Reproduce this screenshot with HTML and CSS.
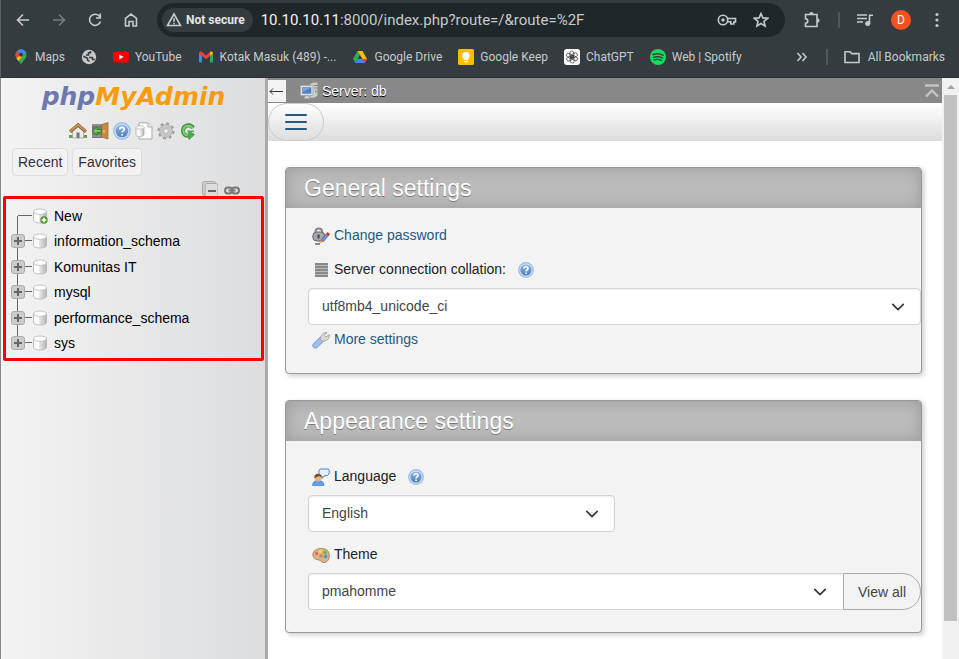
FILE: index.html
```html
<!DOCTYPE html>
<html lang="en">
<head>
<meta charset="utf-8">
<title>phpMyAdmin</title>
<link rel="stylesheet" href="styles.css">
</head>
<body>
<svg class="defs" aria-hidden="true">
  <defs>
    <linearGradient id="blue" x1="0" y1="0" x2="0" y2="1"><stop offset="0" stop-color="#8fb6e0"/><stop offset="1" stop-color="#4a7fbf"/></linearGradient>
    <linearGradient id="cyl" x1="0" y1="0" x2="1" y2="0"><stop offset="0" stop-color="#f7f7f7"/><stop offset=".4" stop-color="#ffffff"/><stop offset="1" stop-color="#b4b4b4"/></linearGradient>
    <symbol id="help" viewBox="0 0 16 16"><circle cx="8" cy="8" r="7.900" fill="#9dbde0"/><circle cx="8" cy="8" r="6.700" fill="#cfe0f3"/><circle cx="8" cy="8" r="5.600" fill="url(#blue)"/><path d="M6 6.600C6 4.200 10 4.200 10 6.400 10 7.800 8.100 7.800 8.100 9.400M8.100 10.600v1.300" fill="none" stroke="#fff" stroke-width="1.600"/></symbol>
    <symbol id="db" viewBox="0 0 16 16"><path d="M1.500 4v8.500C2 15.800 14 15.800 14.500 12.500V4z" fill="url(#cyl)" stroke="#b0b0b0" stroke-width=".8"/><path d="M8 7v7M10 7v7M12 6v7" stroke="#aaa" stroke-opacity=".4"/><ellipse cx="8" cy="3.700" rx="6.500" ry="2.700" fill="#fff" stroke="#b5b5b5" stroke-width=".8"/></symbol>
    <symbol id="chevron" viewBox="0 0 16 16"><path d="M2 5l6 6 6-6" fill="none" stroke="#343a40" stroke-width="2" stroke-linecap="round" stroke-linejoin="round"/></symbol>
  </defs>
</svg>

<header class="browser">
  <div class="toolbar">
    <button class="tool" aria-label="Back"><svg class="i16" viewBox="0 0 16 16"><path d="M14 8H3M8 2.500 2.500 8 8 13.500" class="ln"/></svg></button>
    <button class="tool dim" aria-label="Forward"><svg class="i16" viewBox="0 0 16 16"><path d="M2 8h11M8 2.500 13.500 8 8 13.500" class="ln"/></svg></button>
    <button class="tool" aria-label="Reload"><svg class="i16" viewBox="0 0 16 16"><path d="M12.700 4.500A5.600 5.600 0 1 0 13.500 9.500M13.300 1.500V6H9" class="ln"/></svg></button>
    <button class="tool" aria-label="Home"><svg class="i16" viewBox="0 0 16 16"><path d="M2.500 6.300 8 2l5.500 4.300V14H10V9.500H6V14H2.500z" class="ln"/></svg></button>
    <div class="omnibox">
      <button class="security"><svg class="i16" viewBox="0 0 16 16"><path d="M8 2 14.500 13.500H1.500zM8 6.200v3.500M8 10.700v1.500" class="ln"/></svg>Not secure</button>
      <div class="url"><b>10.10.10.11</b>:8000/index.php?route=/&amp;route=%2F</div>
      <svg class="key" viewBox="0 0 20 16"><circle cx="6" cy="8" r="4.700" class="ln"/><circle cx="6" cy="8" r="1.700" fill="#c7cacb"/><path d="M10.300 6.500H18.500V10H16.800V12H13.800V9.800H10.300" class="ln"/></svg>
      <svg class="i16" viewBox="0 0 16 16"><path d="M8 1.600 9.900 5.900 14.600 6.300 11 9.400 12.100 14 8 11.500 3.900 14 5 9.400 1.400 6.300 6.100 5.900z" class="ln"/></svg>
    </div>
    <button class="tool ext" aria-label="Extensions"><svg class="i18" viewBox="0 0 18 18"><path d="M2.500 3.500H14V15.500H2.500V12.200C5.500 12 5.500 8 2.500 7.800V3.500z" class="ln"/><path d="M6.300 3.200a2.200 2.200 0 0 1 4.400 0zM14.300 7.300a2.200 2.200 0 0 1 0 4.400z" fill="#c7cacb"/></svg></button>
    <span class="rule"></span>
    <button class="tool" aria-label="Media"><svg class="i16" viewBox="0 0 16 16"><path d="M0 3h10M0 6.500h10M0 10h6M12.500 12V3.200H16" class="ln"/><circle cx="10.700" cy="11.500" r="2.500" fill="#c7cacb"/></svg></button>
    <button class="tool" aria-label="Profile"><span class="avatar">D</span></button>
    <button class="tool" aria-label="Menu"><svg class="i16" viewBox="0 0 16 16"><g fill="#c7cacb"><circle cx="8" cy="2.500" r="1.600"/><circle cx="8" cy="8" r="1.600"/><circle cx="8" cy="13.500" r="1.600"/></g></svg></button>
  </div>
  <nav class="bookmarks">
    <a href="#"><svg class="i16" viewBox="0 0 16 16"><path d="M8 16C7 12 2.500 10.500 2.500 5.800a5.500 5.500 0 0 1 11 0C13.500 10.500 9 12 8 16z" fill="#34a853"/><path d="M3.900 2.200A5.500 5.500 0 0 1 13.200 4L8 6z" fill="#4285f4"/><path d="M3.900 2.200 8 6 3.500 9.500C2.200 7 2 4.500 3.900 2.200z" fill="#ea4335"/><path d="M3.500 9.500 8 5 9.500 7.500 5.300 12z" fill="#fbbc04"/><circle cx="8" cy="5.800" r="2" fill="#343c3f"/></svg>Maps</a>
    <a href="#" aria-label="Website"><svg class="i16" viewBox="0 0 16 16"><circle cx="8" cy="8" r="7.200" fill="#c7cacb"/><path d="M2.300 7.200 6.500 9.200V11L8.500 12.500M9.500 2v1.800H7.500V6H5M8 8.500h3.500v2H14" fill="none" stroke="#343c3f" stroke-width="1.500"/></svg></a>
    <a href="#"><svg class="i16" viewBox="0 0 16 16"><rect y="2.500" width="16" height="11" rx="3" fill="#f00"/><path d="M6.300 5.500v5l4.300-2.500z" fill="#fff"/></svg>YouTube</a>
    <a href="#"><svg class="i16" viewBox="0 0 16 16"><path d="M1 4v9.500h3V7z" fill="#4285f4"/><path d="M15 4v9.500h-3V7z" fill="#34a853"/><path d="M1 4.500C1 2.500 3 2 4 3l4 3.200L12 3V7L8 10.200 4 7 1 5z" fill="#ea4335"/><path d="M12 3c1-1 3-.5 3 1.500L12 7z" fill="#fbbc04"/></svg>Kotak Masuk (489) -...</a>
    <a href="#"><svg class="i16" viewBox="0 0 16 16"><path d="M5.500 2 1 9.700 3.300 14 8 6z" fill="#34a853"/><path d="M5.500 2h5L15 10h-4.500z" fill="#fbbc04"/><path d="M5.500 10H15L12.700 14H3.300z" fill="#4285f4"/><path d="M10.500 10H15l-2.300 4z" fill="#ea4335"/></svg>Google Drive</a>
    <a href="#"><svg class="i16" viewBox="0 0 16 16"><rect width="16" height="16" rx="1.500" fill="#fbbc04"/><circle cx="8" cy="6.700" r="3.700" fill="#fff"/><path d="M6 9h4v2H6zM6 12h4v1.200H6z" fill="#fff"/></svg>Google Keep</a>
    <a href="#"><svg class="i16" viewBox="0 0 16 16"><rect width="16" height="16" rx="3" fill="#fff"/><g fill="none" stroke="#333" stroke-width=".7"><rect x="5.800" y="2" width="4" height="7" rx="2"/><rect x="5.800" y="2" width="4" height="7" rx="2" transform="rotate(60 8 8)"/><rect x="5.800" y="2" width="4" height="7" rx="2" transform="rotate(120 8 8)"/><rect x="5.800" y="2" width="4" height="7" rx="2" transform="rotate(180 8 8)"/><rect x="5.800" y="2" width="4" height="7" rx="2" transform="rotate(240 8 8)"/><rect x="5.800" y="2" width="4" height="7" rx="2" transform="rotate(300 8 8)"/></g></svg>ChatGPT</a>
    <a href="#"><svg class="i16" viewBox="0 0 16 16"><circle cx="8" cy="8" r="8" fill="#1ed760"/><path d="M3 5.500Q8.500 3.800 13.200 6.300M3.500 8.300Q8.500 6.800 12.500 9M4 10.900Q8.300 9.700 11.500 11.500" fill="none" stroke="#343c3f" stroke-width="1.400" stroke-linecap="round"/></svg>Web | Spotify</a>
    <button class="more" aria-label="More bookmarks"><svg class="i16" viewBox="0 0 16 16"><path d="M3.500 4 7 8l-3.500 4M8.500 4 12 8l-3.500 4" class="ln"/></svg></button>
    <span class="rule"></span>
    <a href="#" class="all"><svg class="i16" viewBox="0 0 16 16"><path d="M1 2.800H6L7.800 4.600H15V13.500H1z" class="ln"/></svg>All Bookmarks</a>
  </nav>
</header>

<div class="page">
  <aside class="sidebar">
    <a class="logo" href="#"><span>php</span>MyAdmin</a>
    <div class="shortcuts">
      <a href="#" aria-label="Home"><svg class="i18" viewBox="0 0 18 18"><path d="M0 13h18v3H0z" fill="#65a33e"/><path d="M3.500 8 9 3.500 14.500 8v8h-11z" fill="#ececec" stroke="#999" stroke-width=".7"/><path d="M1 9.800 9 3l8 6.800" fill="none" stroke="#8a5a28" stroke-width="3.400"/><path d="M1 9.500 9 2.700l8 6.800" fill="none" stroke="#c89255" stroke-width="1.800"/><path d="M7.500 10.500h3V16h-3z" fill="#777"/></svg></a>
      <a href="#" aria-label="Log out"><svg class="i18" viewBox="0 0 18 18"><path d="M1 2h10v14H1z" fill="#777"/><path d="M1 3h9M1 14h9" stroke="#aaa"/><path d="M10.500 2.500 17 .500V17l-6.500-2z" fill="#c88a43" stroke="#9a642d" stroke-width=".7"/><path d="M13 8v3" stroke="#f8db91"/><path d="M1.500 9 6 4.800v2.700h4.500v3H6v2.700z" fill="#72c35c" stroke="#307820" stroke-width=".8"/></svg></a>
      <a href="#" aria-label="Documentation"><svg class="i18"><use href="#help"/></svg></a>
      <a href="#" aria-label="MariaDB documentation"><svg class="i18" viewBox="0 0 18 18"><path d="M4 .800H13L17 4.800V17H4z" fill="#fcfcfc" stroke="#aaa"/><path d="M13 .800V5h4" fill="#eee" stroke="#aaa"/><path d="M1 5.500v7.500c1 2 7 2 8 0V5.500z" fill="url(#cyl)" stroke="#aaa" stroke-width=".7"/><ellipse cx="5" cy="5.500" rx="4" ry="1.700" fill="#fff" stroke="#aaa" stroke-width=".7"/></svg></a>
      <a href="#" aria-label="Settings"><svg class="i18" viewBox="0 0 18 18"><circle cx="9" cy="9" r="7" fill="none" stroke="#999" stroke-width="3" stroke-dasharray="2.700 2.800"/><circle cx="9" cy="9" r="4.800" fill="none" stroke="#c4c4c4" stroke-width="4"/><circle cx="9" cy="9" r="6.500" fill="none" stroke="#aaa" stroke-width=".6"/><circle cx="9" cy="9" r="2.400" fill="#eee" stroke="#999" stroke-width=".7"/></svg></a>
      <a href="#" aria-label="Reload navigation"><svg class="i18" viewBox="0 0 18 18"><path d="M14 6C11.500 1.500 4 3 4 8.800c0 3.700 3 5.200 6 5" fill="none" stroke="#388b38" stroke-width="4"/><path d="M13.700 5.800C11 2 4.300 3.500 4.300 8.800c0 3.200 2.700 4.700 5.700 4.700" fill="none" stroke="#7ccc72" stroke-width="2.200"/><path d="M9.500 9 15.500 12.500 10 17.500z" fill="#54aa50" stroke="#388b38" stroke-width=".7"/><path d="M8.500 8.500H15V10H8.500z" fill="#54aa50"/></svg></a>
    </div>
    <div class="quick"><button>Recent</button><button>Favorites</button></div>
    <div class="controls">
      <button aria-label="Collapse all"><svg class="i16" viewBox="0 0 16 16"><rect x=".5" y=".5" width="13" height="14" rx="2" fill="#d0d0d0" stroke="#aaa"/><rect x="3" y="2.500" width="13" height="14" rx="2" fill="#ddd" stroke="#aaa"/><path d="M6 10h8" stroke="#666" stroke-width="2"/></svg></button>
      <button aria-label="Link with main panel"><svg class="i16" viewBox="0 0 16 16"><g fill="none" stroke="#777" stroke-width="2"><rect x="1" y="6.500" width="7" height="6" rx="3"/><rect x="8" y="6.500" width="7" height="6" rx="3"/><path d="M4.500 9.500h7"/></g></svg></button>
    </div>
    <ul class="tree">
      <li class="first"><span class="stem"></span><svg class="i16"><use href="#db"/></svg><svg class="plus" viewBox="0 0 8 8"><circle cx="4" cy="4" r="3.700" fill="#54942f"/><path d="M4 1.700v4.600M1.700 4h4.600" stroke="#fff" stroke-width="1.700"/></svg><a href="#">New</a></li>
      <li><button class="toggle" aria-label="Expand"></button><svg class="i16"><use href="#db"/></svg><a href="#">information_schema</a></li>
      <li><button class="toggle" aria-label="Expand"></button><svg class="i16"><use href="#db"/></svg><a href="#">Komunitas IT</a></li>
      <li><button class="toggle" aria-label="Expand"></button><svg class="i16"><use href="#db"/></svg><a href="#">mysql</a></li>
      <li><button class="toggle" aria-label="Expand"></button><svg class="i16"><use href="#db"/></svg><a href="#">performance_schema</a></li>
      <li class="last"><button class="toggle" aria-label="Expand"></button><svg class="i16"><use href="#db"/></svg><a href="#">sys</a></li>
    </ul>
  </aside>

  <main class="content">
    <div class="serverbar">
      <button class="hide" aria-label="Hide panel"><svg class="i16" viewBox="0 0 16 16"><path d="M15 8.500H2M5 5.500 2 8.500l3 3" fill="none" stroke="#333"/></svg></button>
      <svg class="i18 server" viewBox="0 0 18 18"><path d="M10 2l3-1.500h4.500V14L14 16h-4z" fill="#ccc" stroke="#999" stroke-width=".6"/><path d="M14 3.500h3M14 6h3" stroke="#888"/><path d="M15 8.500h1.500v2H15z" fill="#49b749"/><rect x=".5" y="3.500" width="12.500" height="10" rx="1" fill="#ddd" stroke="#aaa"/><rect x="2.300" y="5.300" width="9" height="6.400" fill="#4c80c8"/><path d="M3 6h7L3 10z" fill="#79a5e0"/><path d="M5 14h4l1 2.500H4z" fill="#ccc"/></svg>
      <a href="#">Server: db</a>
      <button class="top" aria-label="Scroll to top"><svg viewBox="0 0 14 14"><path d="M0 1.500h14M1 12.500 7 6.500l6 6" fill="none" stroke="#c4c4c4" stroke-width="2.400"/></svg></button>
    </div>
    <div class="tabs"><button aria-label="Menu"><svg viewBox="0 0 22 18"><path d="M1 2h20M1 9h20M1 16h20" stroke="#235a81" stroke-width="2" stroke-linecap="round"/></svg></button></div>

    <section class="card">
      <h2>General settings</h2>
      <div class="body general">
        <div class="line"><svg class="i18" viewBox="0 0 18 18"><path d="M3.500 6V4.500c0-4 6.500-4 6.500 0V6" fill="none" stroke="#888" stroke-width="2"/><rect x=".800" y="5" width="12" height="9" rx="4" fill="#a6a6b0" stroke="#666"/><path d="M6.500 7.500v4" stroke="#444" stroke-width="2"/><path d="M9 13.500 14.500 6.500l2.500 1.500-6 7z" fill="#7a8fd8" stroke="#3d4990" stroke-width=".6"/><path d="M14 7 15.500 5 18 7 16.700 9z" fill="#dd3b25"/><path d="M6.500 16.500 9 13.500l2 1.500z" fill="#e9b436"/><path d="M3 17h5" stroke="#222"/></svg><a href="#">Change password</a></div>
        <div class="line next"><svg class="i18" viewBox="0 0 18 18"><path d="M3 3h13M3 6h13M3 9h13M3 12h13M3 15h13" stroke="#666" stroke-width="1.500"/><path d="M3 4.500h13M3 7.500h13M3 10.500h13M3 13.500h13" stroke="#bbb"/></svg><label for="collation">Server connection collation:</label><a class="help" href="#" aria-label="Help"><svg class="i16"><use href="#help"/></svg></a></div>
        <div class="select"><select id="collation"><option>utf8mb4_unicode_ci</option></select><svg class="i14"><use href="#chevron"/></svg></div>
        <div class="line more-settings"><svg class="i18" viewBox="0 0 18 18"><path d="M3.500 14.500 9 9" stroke="#6c94d5" stroke-width="6" stroke-linecap="round"/><path d="M3.500 14.500 9 9" stroke="#a3c0f0" stroke-width="4.500" stroke-linecap="round"/><path d="M8.500 9C8 5 11 1 15 1.500L12.500 4.500 14 6 17.300 3.500C18 8 14 11 10.500 10z" fill="#d8d8d8" stroke="#999" stroke-width=".8"/></svg><a href="#">More settings</a></div>
      </div>
    </section>

    <section class="card">
      <h2>Appearance settings</h2>
      <div class="body appearance">
        <div class="line"><svg class="i18" viewBox="0 0 18 18"><path d="M8 1h8.500c1.500 2 1 5-1 6.500L12 8l-2 2.500V8C6.500 7 6 3 8 1z" fill="#e6f0ff" stroke="#4d7ebf"/><path d="M.5 17.500c0-7 11.500-7 11.500 0z" fill="#5f9ff0" stroke="#326eb2" stroke-width=".6"/><circle cx="6" cy="10" r="3.500" fill="#e9b27e"/><path d="M2.300 10C2 4.500 9.500 4.500 9.500 9.500L7.500 8z" fill="#744827"/></svg><label for="language">Language</label><a class="help" href="#" aria-label="Help"><svg class="i16"><use href="#help"/></svg></a></div>
        <div class="select half"><select id="language"><option>English</option></select><svg class="i14"><use href="#chevron"/></svg></div>
        <div class="line theme"><svg class="i18" viewBox="0 0 18 18"><path d="M1 7C3 1.500 15 .500 17 7c1.500 6-2 10-6 9.500-2-.5-2-2-4-2.500C5 13.500 4 13.500 2.500 12.500 1 11 .500 9 1 7z" fill="#ddb487" stroke="#aa7446" stroke-width=".8"/><circle cx="4.500" cy="7.500" r="1.700" fill="#ee6a58"/><circle cx="8.500" cy="5" r="1.700" fill="#f2d65b"/><circle cx="13" cy="6.500" r="1.900" fill="#74ba46"/><circle cx="13.500" cy="10.500" r="1.900" fill="#5397cf"/><circle cx="9" cy="10" r="1.700" fill="#c08b5c"/></svg><label for="theme">Theme</label></div>
        <div class="group"><div class="select"><select id="theme"><option>pmahomme</option></select><svg class="i14"><use href="#chevron"/></svg></div><button>View all</button></div>
      </div>
    </section>
  </main>
  <div class="scrollbar"><span class="arrow"></span><span class="thumb"></span></div>
</div>
</body>
</html>
```
FILE: styles.css
```css
* { box-sizing: border-box; }
body {
  margin: 0;
  height: 100vh;
  display: flex;
  flex-direction: column;
  overflow: hidden;
  background: #fff;
  color: #222;
  font: 14px/20px "Liberation Sans", Arial, sans-serif;
}
button { margin: 0; padding: 0; border: 0; background: none; font: inherit; color: inherit; }
a { color: inherit; text-decoration: none; }
svg { display: block; flex: none; }
.defs { position: absolute; width: 0; height: 0; }
.i14 { width: 14px; height: 14px; }
.i16 { width: 16px; height: 16px; }
.i18 { width: 18px; height: 18px; }
.ln { fill: none; stroke: #c7cacb; stroke-width: 1.6; }

/* browser frame */
.browser {
  flex: none;
  background: #343c3f;
  color: #c7cacb;
  border-left: 1px solid #596164;
  border-bottom: 1px solid #293033;
  font-family: Roboto, "Noto Sans", sans-serif;
  font-size: 12px;
}
.toolbar { display: flex; align-items: center; height: 40px; padding: 0 4px; }
.tool { flex: none; width: 36px; height: 34px; display: flex; align-items: center; justify-content: center; }
.dim { opacity: .45; }
.rule { flex: none; width: 2px; height: 16px; margin: 0 7px 0 8px; background: #50585b; }
.omnibox {
  flex: 1;
  display: flex;
  align-items: center;
  gap: 16px;
  height: 34px;
  margin-left: 8px;
  padding: 0 16px 0 5px;
  border-radius: 17px;
  background: #1f272a;
}
.security {
  flex: none;
  display: flex;
  align-items: center;
  gap: 4px;
  height: 24px;
  padding: 0 8px 0 4px;
  border-radius: 12px;
  background: #343c3f;
  color: #e3e5e6;
  font-weight: 700;
}
.url { flex: 1; margin-left: -8px; font-size: 15px; white-space: nowrap; overflow: hidden; }
.url b { font-weight: 400; color: #f1f3f3; }
.key { width: 20px; height: 16px; }
.ext { margin-left: 9px; }
.avatar { width: 20px; height: 20px; border-radius: 50%; background: #f4511e; color: #fff; line-height: 20px; font-size: 12px; }
.bookmarks { display: flex; align-items: center; gap: 16px; height: 37px; padding: 0 14px 3px 12px; white-space: nowrap; }
.bookmarks a { display: flex; align-items: center; gap: 6px; }
.bookmarks .rule { margin: 0; }
.more { margin-left: auto; }
.bookmarks .all { gap: 8px; }

/* navigation panel */
.page { flex: 1; min-height: 0; display: flex; border-left: 1px solid #888; }
.sidebar {
  flex: none;
  width: 267px;
  padding: 4px 1px 0 2px;
  border-right: 3px solid #aaa;
  background: linear-gradient(to right, #f3f3f3, #dcdddf);
  color: #000;
}
.logo {
  display: block;
  text-align: center;
  font: italic 700 25px/30px "DejaVu Sans", sans-serif;
  color: #f89c0e;
}
.logo span { color: #6c78af; }
.shortcuts { display: flex; justify-content: center; gap: 4px; padding: 10px 2px 0 0; }
.quick { display: flex; gap: 4px; padding: 8px 0 0 9px; }
.quick button {
  height: 28px;
  padding: 0 5px;
  border: 1px solid #ddd;
  border-radius: 4px;
  background: #f2f2f2;
  color: #333;
}
.controls { display: flex; justify-content: flex-end; gap: 6px; height: 20px; padding: 5px 24px 0 0; overflow: hidden; }
.tree {
  display: grid;
  grid-auto-rows: 1fr;
  min-height: 165px;
  margin: 0;
  padding: 4px 0 2px 5px;
  border: 3px solid #f00;
  border-radius: 2px;
  list-style: none;
}
.tree li { position: relative; display: flex; align-items: center; }
.tree a { margin-left: 6px; }
.tree li > svg { position: relative; }
.stem { width: 14px; height: 1px; margin-left: 7px; background: #666; }
.tree li::before { content: ""; position: absolute; left: 6px; top: 0; bottom: 0; width: 1px; background: #666; }
.tree .first::before { top: 50%; }
.tree .last::before { bottom: 50%; }
.toggle {
  position: relative;
  width: 14px;
  height: 14px;
  margin-right: 7px;
  border: 1px solid #aaa;
  border-radius: 3px;
  background: linear-gradient(#666, #666) center / 8px 2px no-repeat, linear-gradient(#666, #666) center / 2px 8px no-repeat, #ccc;
}
.toggle::after { content: ""; position: absolute; left: 13px; top: 5px; width: 7px; height: 1px; background: #666; }
.tree li > .plus { position: absolute; left: 29px; top: 13px; width: 8px; height: 8px; }

/* main panel */
.content { flex: 1; min-width: 0; }
.serverbar { display: flex; align-items: center; height: 25px; padding-right: 3px; background: #888; color: #fff; text-shadow: 0 1px 0 #000; }
.hide { width: 18px; height: 22px; background: #f3f3f3; }
.server { margin: 0 4px 0 14px; }
.top { margin-left: auto; }
.top svg { width: 14px; height: 14px; }
.tabs { height: 38px; background: linear-gradient(#fff, #dcdcdc); }
.tabs button {
  display: flex;
  align-items: center;
  justify-content: center;
  width: 56px;
  height: 38px;
  border: 1px solid #ccc;
  border-radius: 20px;
}
.tabs svg { width: 22px; height: 18px; }
.card {
  margin: 26px 20px 0 17px;
  border: 1px solid #999;
  border-radius: 4px;
  background: #f3f3f3;
  box-shadow: 2px 2px 5px #ccc;
}
.card h2 {
  margin: 0;
  padding: 0 18px;
  border-radius: 3px 3px 0 0;
  background: #bbb;
  box-shadow: inset 0 0 15px #999;
  color: #fff;
  font-size: 23px;
  line-height: 40px;
  font-weight: 400;
  text-shadow: 0 1px 0 #777;
}
.body { padding-left: 22px; }
.general { padding-top: 17px; padding-bottom: 24px; }
.appearance { padding-top: 25px; padding-bottom: 22px; }
.line { display: flex; align-items: center; gap: 4px; padding-left: 4px; color: #222; }
.line > svg { margin-top: 2px; }
.line > a { color: #235a81; }
.next { margin: 14px 0 9px; }
.help { margin-left: 8px; }
.help svg { margin-top: 2px; }
.more-settings { margin-top: 4px; }
.theme { margin: 12px 0 9px; }
.select { position: relative; }
.select select {
  display: block;
  width: 100%;
  height: 37px;
  padding: 0 40px 2px 13px;
  border: 1px solid #ced4da;
  border-radius: 4px;
  appearance: none;
  background: #fff;
  box-shadow: inset 0 1px 2px #eee;
  color: #444;
  font: inherit;
}
.select svg { position: absolute; right: 16px; top: 12px; pointer-events: none; }
.half { width: 50%; margin-top: 9px; }
.group { display: flex; }
.group .select { flex: 1; }
.group select { border-right: 0; border-radius: 4px 0 0 4px; }
.group button { width: 78px; border: 1px solid #aaa; border-radius: 0 20px 20px 0; background: #f3f3f3; color: #444; }
.scrollbar { flex: none; display: flex; flex-direction: column; width: 17px; padding: 0 2px; background: #f1f1f1; }
.arrow { align-self: center; margin: 7px 0 6px; border: 4px solid transparent; border-top: 0; border-bottom-color: #a3a3a3; }
.thumb { flex: none; height: 90.5%; background: #c1c1c1; }
```
